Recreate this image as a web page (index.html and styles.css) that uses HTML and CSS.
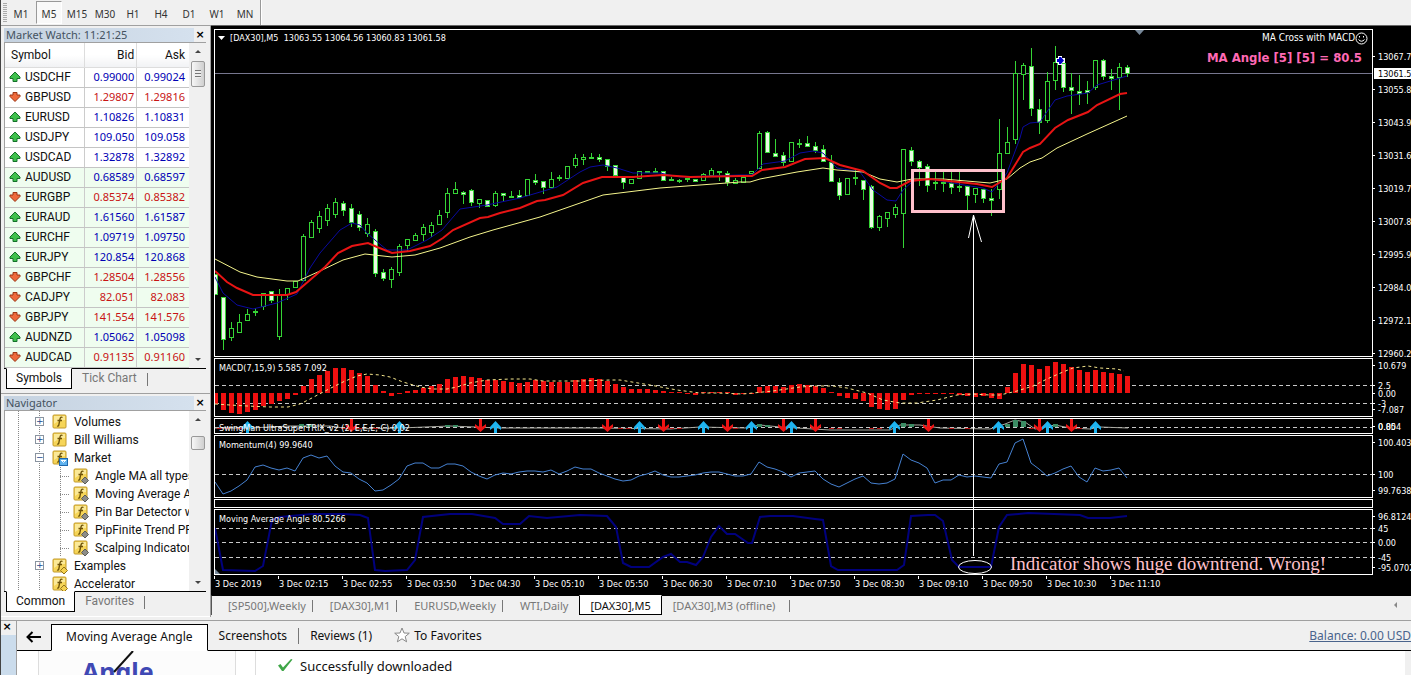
FILE: index.html
```html
<!DOCTYPE html>
<html lang="en">
<head>
    <meta charset="UTF-8">
    <meta name="viewport" content="width=device-width, initial-scale=1.0">
    <title>[DAX30],M5</title>
    <link rel="stylesheet" href="styles.css">
</head>
<body>
    <!-- shared icons -->
    <svg class="defs" width="0" height="0">
        <symbol id="up" viewBox="0 0 12 12"><path d="M6 1 L11 6 V7.500 H8 V10.500 H4 V7.500 H1 V6 Z" fill="#3fc04c" stroke="#15702a"/></symbol>
        <symbol id="down" viewBox="0 0 12 12"><path d="M6 10.500 L1 5.500 V4 H4 V1.500 H8 V4 H11 V5.500 Z" fill="#ee6a3c" stroke="#9c3514"/></symbol>
        <symbol id="fx" viewBox="0 0 16 16">
            <rect x="1" y="1" width="13" height="13" rx="1" fill="#f6d558" stroke="#c29a2a"/>
            <path d="M2 2 H13 V6 Q7 6 2 10 Z" fill="#fbe997"/>
            <path d="M10.500 3.500 Q8.500 2.500 8 5 L6.800 11 Q6.500 12.500 5 12 M5.500 6.500 H10" fill="none" stroke="#6d5208" stroke-width="1.300"/>
        </symbol>
        <symbol id="fx-user" viewBox="0 0 16 16">
            <use href="#fx"/>
            <path d="M12 9 L15.500 12.500 L12 16 L8.500 12.500 Z" fill="#8d8d88" stroke="#5d5d58"/>
        </symbol>
        <symbol id="fx-example" viewBox="0 0 16 16">
            <use href="#fx"/>
            <path d="M12 9 L15.500 12.500 L12 16 L8.500 12.500 Z" fill="#f4d04e" stroke="#93741a"/>
        </symbol>
        <symbol id="fx-market" viewBox="0 0 16 16">
            <use href="#fx"/>
            <rect x="7.500" y="8.500" width="8" height="7" fill="#5fb2ee" stroke="#1f68ac"/>
            <path d="M9 10.500 H14 M10 11 Q11.500 14 13 11" fill="none" stroke="#fff"/>
        </symbol>
    </svg>

    <header class="toolbar">
        <span class="grip"></span>
        <button>M1</button>
        <button class="active">M5</button>
        <button>M15</button>
        <button>M30</button>
        <button>H1</button>
        <button>H4</button>
        <button>D1</button>
        <button>W1</button>
        <button>MN</button>
        <span class="toolbar-end"></span>
    </header>

    <div class="workspace">
        <aside class="sidebar">
            <section class="panel">
                <div class="panel-title"><h2>Market Watch: 11:21:25</h2><button class="close" aria-label="Close market watch">×</button></div>
                <div class="panel-body">
                    <table class="quotes">
                        <thead><tr><th>Symbol</th><th>Bid</th><th>Ask</th></tr></thead>
                        <tbody id="quotes"></tbody>
                    </table>
                    <div class="scrollbar"><span class="arrow-up"></span><span class="thumb thumb-grip"></span><span class="arrow-down"></span></div>
                </div>
                <div class="tabs">
                    <button class="tab active">Symbols</button>
                    <button class="tab">Tick Chart</button>
                    <span class="bar"></span>
                </div>
            </section>

            <section class="panel">
                <div class="panel-title"><h2>Navigator</h2><button class="close" aria-label="Close navigator">×</button></div>
                <div class="panel-body">
                    <ul class="tree">
                        <li><span class="expander">+</span><svg><use href="#fx"/></svg>Volumes</li>
                        <li><span class="expander">+</span><svg><use href="#fx"/></svg>Bill Williams</li>
                        <li><span class="expander">−</span><svg><use href="#fx-market"/></svg>Market</li>
                        <li class="child"><svg><use href="#fx-user"/></svg>Angle MA all types</li>
                        <li class="child"><svg><use href="#fx-user"/></svg>Moving Average Angle</li>
                        <li class="child"><svg><use href="#fx-user"/></svg>Pin Bar Detector with</li>
                        <li class="child"><svg><use href="#fx-user"/></svg>PipFinite Trend PRO</li>
                        <li class="child"><svg><use href="#fx-user"/></svg>Scalping Indicator</li>
                        <li><span class="expander">+</span><svg><use href="#fx-example"/></svg>Examples</li>
                        <li class="leaf"><svg><use href="#fx-example"/></svg>Accelerator</li>
                    </ul>
                    <div class="scrollbar"><span class="arrow-up"></span><span class="thumb thumb-mid"></span><span class="arrow-down"></span></div>
                </div>
                <div class="tabs">
                    <button class="tab active">Common</button>
                    <button class="tab">Favorites</button>
                    <span class="bar"></span>
                </div>
            </section>
        </aside>

        <main class="chart-window">
            <div class="chart">
                <div class="row price">
                    <svg class="pane"><g id="price" transform="translate(-215 -30)">
                        <path d="M215 73.500 H3000" stroke="#77778f"/>
                    </g></svg>
                    <svg class="axis" id="axis-price"></svg>
                    <p class="symbol-title">[DAX30],M5&nbsp; 13063.55 13064.56 13060.83 13061.58</p>
                    <div class="corner">
                        <p>MA Cross with MACD <svg class="smiley" viewBox="0 0 13 13"><circle cx="6.500" cy="6.500" r="5.500"/><path d="M3.500 7.500 Q6.500 11 9.500 7.500 M4.500 4 V5.500 M8.500 4 V5.500"/></svg></p>
                        <p class="angle">MA Angle [5] [5] = 80.5</p>
                    </div>
                </div>
                <div class="row macd">
                    <svg class="pane"><g id="macd" transform="translate(-215 -359)">
                        <path class="level" d="M215 385.500 H3000 M215 403.500 H3000"/>
                    </g></svg>
                    <svg class="axis" id="axis-macd"></svg>
                </div>
                <div class="row swing">
                    <svg class="pane"><g id="swing" transform="translate(-215 -419)">
                        <path class="level" d="M215 427.500 H3000"/>
                    </g></svg>
                    <svg class="axis" id="axis-swing"></svg>
                </div>
                <div class="row momentum">
                    <svg class="pane"><g id="momentum" transform="translate(-215 -436)">
                        <path class="level" d="M215 474.500 H3000"/>
                    </g></svg>
                    <svg class="axis" id="axis-momentum"></svg>
                </div>
                <div class="row blank">
                    <svg class="pane"></svg>
                    <svg class="axis"></svg>
                </div>
                <div class="row ma-angle">
                    <svg class="pane"><g id="angle" transform="translate(-215 -510)">
                        <path class="level" d="M215 528.500 H3000 M215 542.500 H3000 M215 557.500 H3000"/>
                        <path d="M215 569 V574 H220 Z" fill="#778899"/>
                    </g></svg>
                    <svg class="axis" id="axis-angle"></svg>
                </div>
                <ol class="times" id="times"></ol>

                <svg class="drawings">
                    <g transform="translate(-211 -26)">
                        <path d="M218 36 H225 L221.500 40 Z" fill="#fff"/>
                        <path d="M1135 30 H1144 L1139.500 35 Z" fill="#778899"/>
                        <path d="M1058 56 H1062 V58 H1065 V63 H1062 V65 H1058 V63 H1056 V58 H1058 Z" fill="#fff"/>
                        <path d="M1059 57 H1061 L1064 60.500 L1061 64 H1059 V62 H1057 V59 H1059 Z" fill="#0000c8"/>
                        <rect x="912.500" y="170.500" width="91" height="41" fill="none" stroke="#ffc0cb" stroke-width="3"/>
                        <path d="M973.500 556 V215 L968.500 238 M973.500 215 L981.500 242" fill="none" stroke="#fff"/>
                        <ellipse cx="975" cy="567" rx="16.500" ry="6.500" fill="none" stroke="#fff"/>
                        <text class="remark" x="1010" y="570">Indicator shows huge downtrend. Wrong!</text>
                    </g>
                </svg>
            </div>
            <nav class="chart-tabs">
                <button>[SP500],Weekly</button>
                <button>[DAX30],M1</button>
                <button>EURUSD,Weekly</button>
                <button>WTI,Daily</button>
                <button class="active">[DAX30],M5</button>
                <button>[DAX30],M3 (offline)</button>
                <span class="scroll-left"></span>
            </nav>
        </main>
    </div>

    <section class="terminal">
        <div class="terminal-side"><button class="close" aria-label="Close terminal">×</button></div>
        <div class="terminal-main">
            <nav class="terminal-tabs">
                <button class="back" aria-label="Back"><svg viewBox="0 0 16 12"><path d="M15 6 H2 M6.500 1 L1.500 6 L6.500 11"/></svg></button>
                <button class="active">Moving Average Angle</button>
                <button>Screenshots</button>
                <button class="divided">Reviews (1)</button>
                <button class="favorite"><svg viewBox="0 0 16 16"><path d="M8 1 L10 6 L15.300 6.200 L11.200 9.600 L12.600 14.800 L8 11.800 L3.400 14.800 L4.800 9.600 L0.700 6.200 L6 6 Z"/></svg>To Favorites</button>
                <a class="balance" href="#">Balance: 0.00 USD</a>
            </nav>
            <div class="terminal-content">
                <div class="product">
                    <span>Angle</span>
                    <svg viewBox="0 0 30 30"><path d="M27 0 L8 21"/></svg>
                </div>
                <p class="status"><svg viewBox="0 0 16 14"><path d="M1 7.500 L3.500 6 L6 9.500 L14 1 L15.500 1.500 L6.500 13 H5 Z"/></svg>Successfully downloaded</p>
                <span class="content-scroll"></span>
            </div>
        </div>
    </section>

    <script src="chart.js"></script>
</body>
</html>
```

FILE: styles.css
```css
* {
    box-sizing: border-box;
}
body {
    margin: 0;
    min-height: 100vh;
    display: flex;
    flex-direction: column;
    background: #f0f0f0;
    color: #111;
    font: 12px/18px "Noto Sans", "Open Sans", sans-serif;
    border-left: 1px solid #444;
    overflow: hidden;
}
button {
    padding: 0;
    border: 0;
    background: none;
    color: inherit;
    font: inherit;
    white-space: nowrap;
}
p, h2, ul, ol {
    margin: 0;
    padding: 0;
    font-weight: normal;
    list-style: none;
}
.defs {
    position: absolute;
}

/* timeframes */
.toolbar {
    display: flex;
    height: 26px;
    padding-left: 2px;
    border-bottom: 1px solid #a0a0a0;
    font-size: 10px;
    color: #333;
}
.grip {
    width: 4px;
    margin: 3px 0;
    background: repeating-linear-gradient(#aaa 0 1px, #f0f0f0 1px 2px);
}
.toolbar button {
    width: 26px;
    height: 23px;
    margin: 1px 1px 0;
    padding-top: 2px;
}
.toolbar button.active {
    border: 1px solid #999;
    border-right-color: #fff;
    border-bottom-color: #fff;
    background: #f9f9f9;
}
.toolbar-end {
    width: 2px;
    margin-left: 1px;
    border-left: 1px solid #999;
    background: #fff;
}

/* left side */
.workspace {
    display: flex;
}
.sidebar {
    width: 210px;
    flex: none;
    border-right: 1px solid #a0a0a0;
    font-family: Roboto, "Noto Sans", sans-serif;
}
.panel {
    padding: 2px 4px 4px 3px;
    border-bottom: 1px solid #a0a0a0;
}
.panel-title {
    display: flex;
    height: 14px;
}
.panel-title h2 {
    flex: 1;
    padding-left: 2px;
    background: linear-gradient(90deg, #c5d2e0, #d5e1ee);
    color: #44525f;
    font: 11px/14px "Noto Sans", sans-serif;
}
.close {
    width: 12px;
    font: bold 11px/14px "DejaVu Sans", sans-serif;
    color: #000;
}
.panel-body {
    display: flex;
    border-top: 1px solid #a0a0a0;
    border-left: 1px solid #a0a0a0;
    background: #fff;
}
.quotes {
    flex: 1;
    table-layout: fixed;
    border-collapse: collapse;
}
.quotes th, .quotes td {
    height: 20px;
    padding: 0 2px;
    border-right: 1px solid #ccc;
    border-bottom: 1px solid #c4c4c4;
    text-align: right;
    line-height: 18px;
}
.quotes th {
    width: 52px;
    height: 24px;
    font-weight: normal;
    background: linear-gradient(#fff 50%, #f1f2f4);
    border-color: #ddd;
}
.quotes th:first-child {
    width: 79px;
    padding-left: 6px;
    text-align: left;
}
.quotes th:last-child, .quotes td:last-child {
    border-right: 0;
    padding-right: 4px;
}
.quotes td {
    font: 11px/18px "Noto Sans", sans-serif;
}
.quotes tr.tint {
    background: #effdef;
}
.quotes tr.rise {
    color: #0000b4;
}
.quotes tr.fall {
    color: #c81414;
}
.quotes td:first-child {
    padding-left: 4px;
    text-align: left;
    color: #111;
    font: 12px/18px Roboto, sans-serif;
}
.quotes svg {
    width: 12px;
    height: 12px;
    margin-right: 4px;
    vertical-align: -2px;
}
.scrollbar {
    display: flex;
    flex-direction: column;
    align-items: center;
    width: 17px;
    padding: 7px 0;
    background: #f0f0f0;
}
.arrow-up, .arrow-down {
    border: 3px solid transparent;
    border-top: 0;
    border-bottom: 3px solid #444;
}
.arrow-down {
    margin-top: auto;
    border-bottom: 0;
    border-top: 3px solid #444;
}
.thumb {
    width: 14px;
    height: 14px;
    margin-top: 15px;
    border: 1px solid #999;
    border-radius: 2px;
    background: linear-gradient(90deg, #f7f7f7, #cfcfcf);
}
.thumb-grip {
    height: 26px;
    margin-top: 8px;
    padding: 8px 3px;
    background: repeating-linear-gradient(#777 0 1px, #eee 1px 3px) content-box, linear-gradient(90deg, #f7f7f7, #cfcfcf);
}
.tabs {
    display: flex;
    height: 21px;
    padding-left: 2px;
    border-top: 1px solid #000;
}
.tab {
    height: 21px;
    margin-top: -1px;
    padding: 0 10px;
    line-height: 21px;
    color: #777;
}
.tab.active {
    padding: 0 9px;
    border: 1px solid #000;
    border-top-color: #fff;
    background: #fff;
    color: #111;
    line-height: 19px;
}
.bar {
    height: 13px;
    margin-top: 4px;
    border-left: 1px solid #777;
}
.panel + .panel {
    border-bottom-color: #fff;
}

/* navigator tree */
.tree {
    flex: 1;
    width: 0;
    height: 180px;
    padding-top: 2px;
    overflow: hidden;
    background: repeating-linear-gradient(#888 0 1px, transparent 1px 2px) 13px 0 / 1px 100% no-repeat,
        repeating-linear-gradient(#888 0 1px, transparent 1px 2px) 34px 0 / 1px 100% no-repeat;
}
.tree li {
    display: flex;
    align-items: center;
    height: 18px;
    padding-left: 30px;
    white-space: nowrap;
}
.tree svg {
    flex: none;
    width: 16px;
    height: 16px;
    margin: 0 6px 0 8px;
}
.tree li.child {
    padding-left: 55px;
    background: repeating-linear-gradient(#888 0 1px, transparent 1px 2px) 55px 0 / 1px 18px no-repeat,
        repeating-linear-gradient(90deg, #888 0 1px, transparent 1px 2px) 55px 9px / 10px 1px no-repeat;
}
.tree li.child svg {
    margin-left: 13px;
}
.tree li.leaf {
    padding-left: 39px;
}
.expander {
    width: 9px;
    height: 9px;
    border: 1px solid #8a94a0;
    background: #fff;
    color: #234a8c;
    font: 9px/7px "DejaVu Sans", sans-serif;
    text-align: center;
}

/* chart */
.chart-window {
    flex: 1;
    min-width: 0;
}
.chart {
    position: relative;
    display: flex;
    flex-direction: column;
    gap: 1px;
    padding: 3px 0 0 3px;
    border-top: 1px solid #666;
    margin-top: -1px;
    background: #000;
    color: #fff;
    font: 9px/12px "DejaVu Sans Condensed", "DejaVu Sans", sans-serif;
}
.row {
    position: relative;
    display: flex;
}
.pane {
    flex: 1;
    width: 0;
    height: 100%;
    border: 1px solid #fff;
}
.axis {
    width: 38px;
    height: 100%;
    fill: #fff;
}
.price { height: 328px; }
.macd { height: 59px; }
.swing { height: 16px; }
.momentum { height: 63px; }
.blank { height: 9px; }
.ma-angle { height: 66px; }
.chart text {
    fill: #fff;
}
.chart .current {
    fill: #000;
}
.level {
    stroke: #c8c8c8;
    stroke-dasharray: 4 3;
}
.symbol-title {
    position: absolute;
    top: 3px;
    left: 16px;
}
.corner {
    position: absolute;
    top: 3px;
    right: 43px;
    text-align: right;
    font-size: 10px;
}
.corner .angle {
    margin-right: 6px;
    color: #ff69b4;
    font: bold 13px/26px "DejaVu Sans Condensed", "DejaVu Sans", sans-serif;
}
.smiley {
    width: 13px;
    height: 13px;
    margin-left: -3px;
    vertical-align: -4px;
    fill: none;
    stroke: #fff;
}
.times {
    display: flex;
    height: 19px;
    overflow: hidden;
}
.times li {
    flex: none;
    width: 64px;
    height: 4px;
    margin-top: -1px;
    border-left: 1px solid #fff;
    line-height: 18px;
    white-space: nowrap;
}
.drawings {
    position: absolute;
    top: 0;
    left: 0;
    width: 100%;
    height: 100%;
}
.chart .remark {
    fill: #ffc0cb;
    font: 19px "Liberation Serif", serif;
}

.chart-tabs {
    display: flex;
    height: 20px;
    padding-left: 7px;
    border-top: 1px solid #000;
    border-left: 1px solid #555;
    color: #777;
    font-size: 11px;
}
.chart-tabs button {
    position: relative;
    height: 19px;
    padding: 0 15px 0 9px;
    line-height: 20px;
}
.chart-tabs button::after {
    content: "";
    position: absolute;
    right: 8px;
    top: 4px;
    height: 12px;
    border-right: 1px solid #777;
}
.chart-tabs button.active {
    height: 20px;
    margin: -1px 2px 0 -4px;
    padding: 0 10px;
    border: 1px solid #000;
    border-top-color: #fff;
    background: #fff;
    color: #111;
}
.chart-tabs button:nth-child(6)::after {
    right: 0;
}
.chart-tabs button.active::after, .chart-tabs button:nth-child(4)::after {
    display: none;
}
.scroll-left {
    margin: 6px 14px 0 auto;
    height: 6px;
    border: 3px solid transparent;
    border-left: 0;
    border-right: 3px solid #888;
}

/* terminal */
.terminal {
    flex: 1;
    display: flex;
    margin-top: 3px;
    border-top: 1px solid #a0a0a0;
}
.terminal-side {
    width: 16px;
    border-right: 1px solid #a0a0a0;
    background: linear-gradient(#f0f0f0 14px, #cbdcec 14px);
}
.terminal-side .close {
    display: block;
    line-height: 12px;
}
.terminal-main {
    flex: 1;
    min-width: 0;
    display: flex;
    flex-direction: column;
}
.terminal-tabs {
    display: flex;
    height: 30px;
    padding-top: 3px;
    border-bottom: 1px solid #000;
}
.terminal-tabs button {
    height: 25px;
    padding: 0 11px;
}
.terminal-tabs .active {
    height: 27px;
    padding: 0 14px;
    border: 1px solid #000;
    border-bottom-color: #fff;
    background: #fff;
}
.terminal-tabs .back {
    width: 34px;
    padding: 0 9px;
}
.back svg {
    width: 16px;
    height: 12px;
    fill: none;
    stroke: #000;
    stroke-width: 2;
    vertical-align: middle;
}
.terminal-tabs .divided {
    height: 16px;
    margin-top: 4px;
    border-left: 1px solid #777;
    line-height: 16px;
}
.favorite svg {
    width: 16px;
    height: 16px;
    margin-right: 4px;
    fill: #fff;
    stroke: #888;
    vertical-align: -3px;
}
.balance {
    margin-left: auto;
    color: #4a648c;
    line-height: 24px;
    white-space: nowrap;
}
.terminal-content {
    flex: 1;
    display: flex;
    height: 24px;
    background: #fff;
}
.product {
    position: relative;
    width: 198px;
    margin-left: 21px;
    border-left: 1px solid #ddd;
    border-right: 1px solid #ddd;
    background: #fcfcfc;
    overflow: hidden;
}
.product span {
    display: block;
    height: 24px;
    margin-left: 43px;
    color: #3f48b4;
    font: bold 25px/40px "Noto Sans", sans-serif;
}
.product svg {
    position: absolute;
    top: 0;
    left: 67px;
    width: 30px;
    height: 30px;
    stroke: #111;
    stroke-width: 2;
}
.status {
    margin-left: 19px;
    padding: 6px 0 0 21px;
    border-left: 1px solid #ddd;
    font-size: 13px;
}
.status svg {
    width: 16px;
    height: 14px;
    margin-right: 7px;
    fill: #3fa648;
    vertical-align: -1px;
}
.content-scroll {
    width: 6px;
    margin-left: auto;
    background: #f0f0f0;
}
```

FILE: chart.js
```js
const NS = 'http://www.w3.org/2000/svg';

function add(parent, tag, attrs, text) {
    const el = document.createElementNS(NS, tag);
    for (const key in attrs) el.setAttribute(key, attrs[key]);
    if (text) el.textContent = text;
    parent.appendChild(el);
    return el;
}
const byId = id => document.getElementById(id);
const barX = i => 215 + 8 * i;

// Market watch
const quotes = [
    ['USDCHF', '0.99000', '0.99024', 1], ['GBPUSD', '1.29807', '1.29816', 0],
    ['EURUSD', '1.10826', '1.10831', 1], ['USDJPY', '109.050', '109.058', 1],
    ['USDCAD', '1.32878', '1.32892', 1], ['AUDUSD', '0.68589', '0.68597', 1],
    ['EURGBP', '0.85374', '0.85382', 0], ['EURAUD', '1.61560', '1.61587', 1],
    ['EURCHF', '1.09719', '1.09750', 1], ['EURJPY', '120.854', '120.868', 1],
    ['GBPCHF', '1.28504', '1.28556', 0], ['CADJPY', '82.051', '82.083', 0],
    ['GBPJPY', '141.554', '141.576', 0], ['AUDNZD', '1.05062', '1.05098', 1],
    ['AUDCAD', '0.91135', '0.91160', 0]
];
byId('quotes').innerHTML = quotes.map(([name, bid, ask, up], i) =>
    `<tr class="${up ? 'rise' : 'fall'}${i > 4 ? ' tint' : ''}">` +
    `<td><svg><use href="#${up ? 'up' : 'down'}"/></svg>${name}</td><td>${bid}</td><td>${ask}</td></tr>`
).join('');

// Candles, in thirds of a pixel: high, body top, body bottom, low, kind (h = hollow, f = filled)
const candles = `822 822 883 883 f|892 892 1018 1046 f|967 985 1010 1019 h|942 967 995 995 h|928 943 959 959 h|925 932 934 944 h
880 880 918 926 h|874 874 899 907 f|867 883 1009 1016 h|863 863 881 898 h|842 842 860 860 h|702 709 839 842 h
660 666 711 711 h|633 648 684 696 h|612 624 660 675 h|594 606 642 651 h|603 609 630 645 f|612 624 666 678 f
633 642 681 690 f|654 672 699 708 h|687 693 820 828 f|808 817 835 841 f|802 808 836 860 h|732 739 815 824 h
718 718 736 750 h|699 706 720 720 h|672 681 702 720 h|666 675 696 708 h|630 646 673 673 h|564 579 635 650 h
546 568 580 580 h|572 577 581 608 f|566 571 607 615 f|597 597 608 620 h|601 601 618 618 f|573 579 614 619 h
579 579 585 602 f|573 588 592 592 f|570 586 591 591 f|538 538 586 586 h|522 541 546 551 f|543 543 562 578 f
516 538 561 561 h|525 531 534 540 f|499 499 533 533 h|462 474 495 500 h|463 472 478 491 h|458 471 473 473 f
462 472 476 482 f|478 478 499 509 f|496 496 524 524 f|531 531 547 563 f|537 537 548 548 h|513 513 535 535 h
512 512 514 514 f|504 512 514 514 f|512 512 541 541 f|531 537 539 539 f|537 539 541 545 f|535 535 538 542 f
536 536 544 544 f|519 522 541 541 h|504 511 524 524 h|512 512 514 540 f|513 519 547 554 f|534 540 548 548 h
530 530 545 545 h|514 514 520 520 h|393 400 505 505 h|393 396 457 457 f|417 459 469 469 f|456 465 486 495 f
427 427 482 482 h|417 429 432 441 f|408 429 439 439 f|426 438 449 455 f|435 448 482 482 f|466 485 544 544 f
535 546 584 597 f|535 535 581 581 h|511 532 535 552 f|540 540 566 596 f|556 559 680 684 f|645 649 682 690 h
637 637 653 677 h|612 621 642 650 h|448 448 640 740 h|442 451 482 495 f|480 484 500 555 f|492 498 554 572 f
516 546 550 566 f|514 546 550 572 f|516 549 561 578 f|516 559 562 573 f|559 559 586 632 f|565 565 581 607 h
566 566 594 606 f|566 594 601 645 f|357 460 566 594 h|382 427 458 458 h|183 220 418 430 h|188 196 221 296 h
144 199 325 345 f|297 328 366 399 f|217 244 361 366 h|138 187 241 267 h|189 189 262 274 f|220 262 271 339 f
225 274 278 312 f|243 271 275 309 f|181 181 262 268 h|177 181 229 236 f|208 229 233 267 f|189 202 230 327 h
196 202 220 227 f`.split(/[|\n]/);

const price = byId('price');
candles.forEach((line, i) => {
    const [high, top, bottom, low, kind] = line.split(' ');
    const [h, t, b, l] = [high, top, bottom, low].map(v => Math.round(v / 3));
    const x = barX(i);
    add(price, 'path', { d: `M${x + .5} ${h} V${t} M${x + .5} ${b} V${l + 1}`, stroke: '#35d435' });
    add(price, 'rect', {
        x: x - 1.5, y: t + .5, width: 4, height: Math.max(b - t, 1),
        fill: kind === 'f' ? '#eafbe4' : '#000', stroke: '#35d435'
    });
});

const line = (parent, points, color, width) =>
    add(parent, 'polyline', { points, fill: 'none', stroke: color, 'stroke-width': width });

line(price, '215,277 223,293 237,305 253,309 277,303 297,294 310,268 320,253 340,230 352,223 360,225 367,233 375,240 387,250 407,250 427,240 442,230 460,209 487,205 520,198 557,187 580,172 590,167 603,165 617,168 633,173 660,173 680,177 740,175 752,175 763,164 785,161 800,153 813,151 823,153 837,168 860,172 873,190 887,200 896,201 903,190 913,181 930,179 970,186 983,188 992,192 1007,173 1020,138 1023,127 1030,123 1040,122 1055,100 1067,96 1088,93 1097,85 1127,76', '#0a0aa0', 1);
line(price, '215,259 240,272 257,277 287,281 298,281 320,271 343,260 365,254 392,257 415,255 440,248 470,237 493,230 540,217 563,209 603,195 660,188 740,182 750,182 760,179 797,172 823,168 837,170 863,172 880,179 897,182 912,179 943,179 990,183 1007,179 1020,168 1030,162 1042,158 1057,148 1087,134 1127,116', '#f5f58c', 1);
line(price, '215,271 227,282 237,288 253,295 287,295 296,292 310,280 325,267 338,253 352,246 368,243 377,247 392,253 410,251 430,246 443,238 453,230 480,218 488,217 500,213 520,208 537,201 545,200 563,195 583,183 602,177 633,177 663,175 690,177 740,176 752,176 762,170 785,167 805,159 825,158 840,165 863,171 880,183 890,188 897,188 910,181 930,179 977,184 992,187 1007,178 1023,152 1030,148 1040,144 1055,128 1068,120 1088,112 1097,105 1120,94 1127,93', '#e81414', 2);

// MACD histogram, pixels above zero
const macd = byId('macd');
[-11, -17, -20, -21, -19, -17, -13, -11, -8, -6, -2, 7, 14, 18, 22, 25, 25, 23, 20, 17, 8, 2, -3, -1, 2, 3, 5, 7, 9,
    14, 16, 17, 16, 15, 13, 13, 12, 11, 10, 11, 13, 12, 11, 11, 11, 13, 14, 15, 14, 12, 9, 6, 4, 4, 4, 3, 2, 1, 1,
    -1, -2, 1, 1, 1, 1, -2, -1, -1, 6, 7, 7, 6, 8, 9, 8, 7, 5, 1, -3, -5, -6, -8, -14, -16, -17, -16, -7, -2, -1,
    -1, -1, -1, -1, -2, -3, -4, -3, -5, -6, 6, 20, 29, 28, 24, 27, 31, 29, 26, 23, 21, 23, 21, 20, 19, 17
].forEach((v, i) => add(macd, 'rect', {
    x: barX(i) - 2, y: v > 0 ? 393 - v : 393, width: 5, height: Math.abs(v), fill: '#ee1010'
}));
line(macd, '215,404 230,405 247,406 270,407 288,407 300,404 310,399 327,390 343,382 357,376 367,374 380,375 390,377 403,382 420,387 433,389 447,389 457,387 470,383 487,380 510,379 530,379 543,381 563,381 580,381 610,380 620,380 650,385 677,390 700,393 717,393 743,394 773,391 800,387 817,386 833,386 847,388 867,393 883,400 900,403 917,403 937,400 957,395 973,394 990,395 1000,395 1017,391 1033,386 1047,379 1063,372 1073,368 1088,366 1100,368 1117,369 1124,371', '#f5e68c', 1)
    .setAttribute('stroke-dasharray', '3 3');

// SwingMan histogram and signals
const swing = byId('swing');
line(swing, '215,428 250,428 290,426 330,426 350,429 400,428 450,426 500,428 600,428 670,429 700,427 745,428 760,425 780,427 830,430 890,430 900,425 920,425 940,428 990,429 1005,424 1015,420 1025,422 1035,429 1055,425 1070,428 1090,429 1100,427 1128,428', '#a8a8a0', 1);
[[301, 3], [309, 3], [447, 2], [455, 2], [759, 3], [767, 2], [903, 4], [911, 3], [1007, 3], [1015, 7], [1023, 6], [1055, 3]]
    .forEach(([x, h]) => add(swing, 'rect', { x: x - 2, y: 427 - h, width: 5, height: h, fill: '#3c8c64' }));
[219, 227, 239, 343, 359, 375, 620, 628, 671, 679, 735, 831, 839, 871, 879, 951, 967, 1031, 1079]
    .forEach(x => add(swing, 'rect', { x: x - 2, y: 428, width: 5, height: 1, fill: '#b41414' }));
[351, 480, 607, 663, 727, 783, 815, 928, 1039, 1071].forEach(x =>
    add(swing, 'path', { d: `M${x - 1} 419 H${x + 2} V427 L${x + 6} 424 V427 L${x + .5} 432 L${x - 5} 427 V424 L${x - 1} 427 Z`, fill: '#ee1414' }));
[247, 399, 495, 639, 703, 751, 791, 894, 998, 1047, 1095].forEach(x =>
    add(swing, 'path', { d: `M${x - 1} 433 H${x + 2} V427 L${x + 6} 430 V427 L${x + .5} 421 L${x - 5} 427 V430 L${x - 1} 427 Z`, fill: '#1eb4f0' }));

// Momentum, in thirds of a pixel below the top of the sub-windows
const momentum = [380, 418, 408, 393, 375, 337, 330, 340, 346, 340, 348, 310, 300, 310, 304, 333, 352, 354, 373, 383, 409,
    405, 390, 372, 334, 325, 325, 340, 340, 328, 328, 334, 350, 363, 373, 360, 355, 357, 352, 349, 349, 352, 346, 356, 347,
    337, 342, 343, 353, 363, 373, 378, 375, 364, 356, 349, 360, 366, 367, 363, 360, 354, 352, 352, 358, 364, 364, 357, 322,
    336, 342, 350, 366, 353, 352, 348, 373, 387, 397, 384, 372, 364, 384, 388, 384, 372, 298, 315, 323, 340, 384, 376, 375,
    361, 367, 364, 367, 370, 328, 321, 264, 252, 325, 343, 364, 354, 343, 334, 366, 381, 338, 349, 345, 340, 368];
line(byId('momentum'), momentum.map((v, i) => `${barX(i)},${355 + Math.round(v / 3)}`).join(' '), '#4682d2', 1);

line(byId('angle'), '215,528 223,570 255,571 263,566 272,520 280,517 312,514 343,514 360,515 368,518 375,570 385,571 407,570 415,560 423,517 450,514 472,514 495,518 503,524 520,524 529,516 547,518 580,515 607,516 616,527 623,563 631,567 649,567 663,557 671,554 680,562 687,562 696,565 703,557 711,537 719,526 727,534 735,534 748,543 752,543 760,517 770,516 793,516 815,519 823,520 831,566 838,570 897,570 904,565 911,516 928,515 935,515 943,521 952,560 959,567 991,567 999,527 1007,515 1028,513 1080,515 1088,518 1110,518 1127,516', '#00007d', 2);

// Indicator names
[['macd', 371, 'MACD(7,15,9) 5.585 7.092'], ['swing', 431, 'SwingMan UltraSuperTRIX_v2 (2, E,E,E, C) 0.02'],
    ['momentum', 448, 'Momentum(4) 99.9640'], ['angle', 522, 'Moving Average Angle 80.5266']
].forEach(([id, y, text]) => add(byId(id), 'text', { x: 219, y }, text));

// Scales: y is the middle of the label, counted from the top of its own window
function scale(id, labels) {
    const axis = byId(id);
    labels.forEach(([y, text]) => {
        add(axis, 'path', { d: `M0 ${y + .5} H2`, stroke: '#fff' });
        add(axis, 'text', { x: 5, y: y + 4 }, text);
    });
    return axis;
}
const axis = scale('axis-price', [[27, '13067.7'], [60, '13055.8'], [93, '13043.9'], [126, '13031.6'], [159, '13019.7'],
    [192, '13007.8'], [225, '12995.9'], [258, '12984.0'], [291, '12972.1'], [324, '12960.2']]);
add(axis, 'rect', { x: 1, y: 39, width: 40, height: 11, fill: '#fff' });
add(axis, 'text', { x: 5, y: 48, class: 'current' }, '13061.5');
scale('axis-macd', [[7, '10.679'], [27, '2.5'], [35, '0.00'], [45, '-3'], [51, '-7.087']]);
scale('axis-swing', [[8, '0.854'], [8, '0.00']]);
scale('axis-momentum', [[7, '100.4038'], [39, '100'], [55, '99.7638']]);
scale('axis-angle', [[7, '96.8124'], [19, '45'], [33, '0.00'], [48, '-45'], [58, '-95.0702']]);

byId('times').innerHTML = ['2019', '02:15', '02:55', '03:50', '04:30', '05:10', '05:50', '06:30', '07:10', '07:50',
    '08:30', '09:10', '09:50', '10:30', '11:10'].map(t => `<li>3 Dec ${t}</li>`).join('');
```
